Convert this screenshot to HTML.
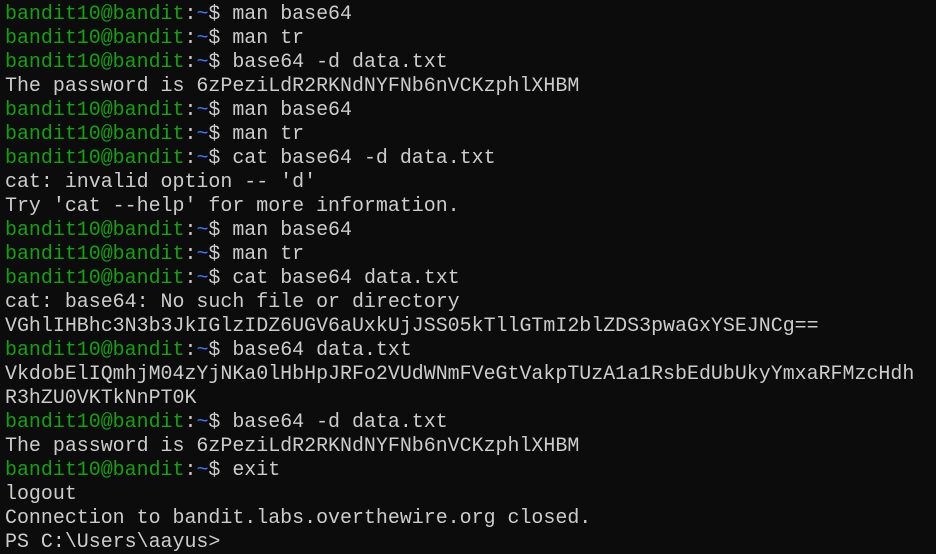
<!DOCTYPE html><html><head><style>
body{margin:0;background:#0c0c0c;width:936px;height:553px;overflow:hidden}
pre{margin:0;padding:2px 0 0 5px;font-family:"Liberation Mono","DejaVu Sans Mono",monospace;font-size:19.95px;line-height:24px;color:#cccccc}
.g{color:#13a10e}.b{color:#3b78ff}
</style></head><body><pre><span class="g">bandit10@bandit</span>:<span class="b">~</span>$ man base64
<span class="g">bandit10@bandit</span>:<span class="b">~</span>$ man tr
<span class="g">bandit10@bandit</span>:<span class="b">~</span>$ base64 -d data.txt
The password is 6zPeziLdR2RKNdNYFNb6nVCKzphlXHBM
<span class="g">bandit10@bandit</span>:<span class="b">~</span>$ man base64
<span class="g">bandit10@bandit</span>:<span class="b">~</span>$ man tr
<span class="g">bandit10@bandit</span>:<span class="b">~</span>$ cat base64 -d data.txt
cat: invalid option -- 'd'
Try 'cat --help' for more information.
<span class="g">bandit10@bandit</span>:<span class="b">~</span>$ man base64
<span class="g">bandit10@bandit</span>:<span class="b">~</span>$ man tr
<span class="g">bandit10@bandit</span>:<span class="b">~</span>$ cat base64 data.txt
cat: base64: No such file or directory
VGhlIHBhc3N3b3JkIGlzIDZ6UGV6aUxkUjJSS05kTllGTmI2blZDS3pwaGxYSEJNCg==
<span class="g">bandit10@bandit</span>:<span class="b">~</span>$ base64 data.txt
VkdobElIQmhjM04zYjNKa0lHbHpJRFo2VUdWNmFVeGtVakpTUzA1a1RsbEdUbUkyYmxaRFMzcHdh
R3hZU0VKTkNnPT0K
<span class="g">bandit10@bandit</span>:<span class="b">~</span>$ base64 -d data.txt
The password is 6zPeziLdR2RKNdNYFNb6nVCKzphlXHBM
<span class="g">bandit10@bandit</span>:<span class="b">~</span>$ exit
logout
Connection to bandit.labs.overthewire.org closed.
PS C:\Users\aayus&gt;</pre></body></html>
